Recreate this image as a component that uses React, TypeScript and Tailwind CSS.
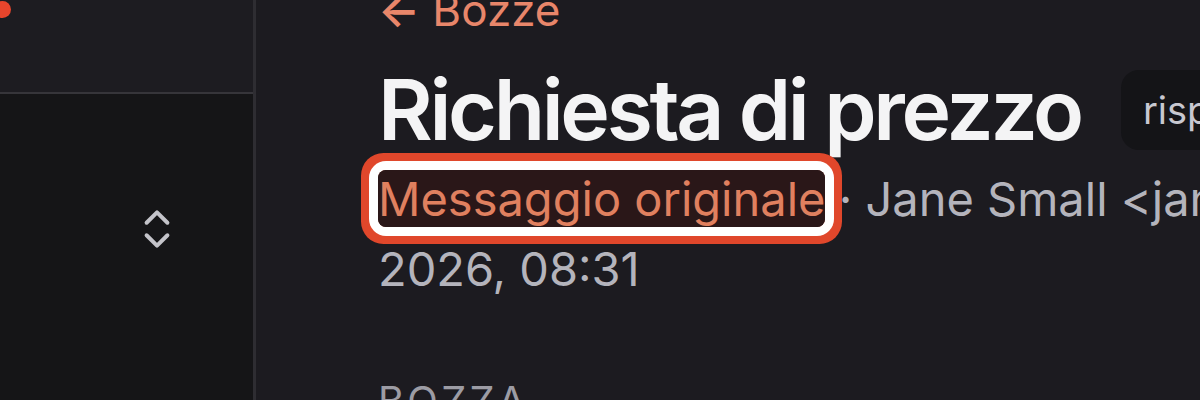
import React from "react";
import { ChevronsUpDown } from "lucide-react";

export default function App() {
  return (
    <div className="w-[1200px] h-[400px] overflow-hidden flex bg-[#1c1b20] font-['Inter','Noto_Sans',sans-serif]">
      <aside className="w-[256px] shrink-0 flex flex-col border-r-[3px] border-[#2e2d32]">
        <div className="relative h-[94px] shrink-0 bg-[#1d1c21] border-b-[2px] border-[#36353a]">
          <span className="absolute left-[-6px] top-[1px] w-[17px] h-[17px] rounded-full bg-[#e8452c]" />
        </div>
        <div className="flex-1 bg-[#151517] flex justify-end pr-[71px] pt-[110px]">
          <ChevronsUpDown className="w-[50px] h-[50px] text-[#c4c4ca]" strokeWidth={1.9} />
        </div>
      </aside>
      <main className="flex-1 min-w-0 pl-[122px]">
        <div className="-mt-[14px] text-[44px] leading-[48px] text-[#e8866a] whitespace-nowrap">
          <span className="font-semibold">←</span> Bozze
        </div>
        <div className="mt-[26px] flex items-center gap-[40px] whitespace-nowrap">
          <h1 className="text-[84px] leading-[100px] font-semibold tracking-[-0.04em] text-[#f4f4f5]">Richiesta di prezzo</h1>
          <span className="h-[80px] flex items-center px-[22px] rounded-[18px] bg-[#141417] text-[38px] text-[#c8c8d0]">rispondi</span>
        </div>
        <p className="mt-[4px] text-[47px] leading-[70px] text-[#b4b4bc] whitespace-nowrap">
          <span className="rounded-[8px] bg-[#2a1718] text-[#e0805f] shadow-[0_0_0_9px_#ffffff,0_0_0_17px_#e0472b]">Messaggio originale</span>
          <span> · Jane Small &lt;jane.small@studiorossi.it&gt; · 14 gennaio</span>
          <br />
          <span>2026, 08:31</span>
        </p>
        <div className="mt-[73px] text-[40px] leading-[48px] tracking-[0.08em] text-[#9c9ca4] uppercase">Bozza</div>
      </main>
    </div>
  );
}
